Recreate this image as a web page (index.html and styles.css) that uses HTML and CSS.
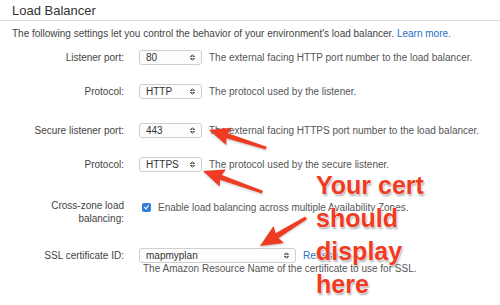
FILE: index.html
```html
<!DOCTYPE html>
<html lang="en">
  <head>
    <meta charset="UTF-8" />
    <title>Load Balancer</title>
    <link rel="stylesheet" href="styles.css">
  </head>
  <body>
    <div class="panel">
      <h2 class="panel-title">Load Balancer</h2>
      <p class="intro">
        The following settings let you control the behavior of your environment's load balancer.
        <a href="#">Learn more.</a>
      </p>

      <div class="form">
        <div class="field">
          <span class="label">Listener port:</span>
          <div class="control">
            <span class="select">80</span>
            <span class="hint">The external facing HTTP port number to the load balancer.</span>
          </div>
        </div>

        <div class="field field-protocol">
          <span class="label">Protocol:</span>
          <div class="control">
            <span class="select">HTTP</span>
            <span class="hint">The protocol used by the listener.</span>
          </div>
        </div>

        <div class="field field-secure">
          <span class="label">Secure listener port:</span>
          <div class="control">
            <span class="select">443</span>
            <span class="hint">The external facing HTTPS port number to the load balancer.</span>
          </div>
        </div>

        <div class="field field-protocol">
          <span class="label">Protocol:</span>
          <div class="control">
            <span class="select">HTTPS</span>
            <span class="hint">The protocol used by the secure listener.</span>
          </div>
        </div>

        <div class="field field-crosszone">
          <span class="label">Cross-zone load<br>balancing:</span>
          <div class="control control-top">
            <span class="checkbox"></span>
            <span class="hint">Enable load balancing across multiple Availability Zones.</span>
          </div>
        </div>

        <div class="field field-ssl">
          <span class="label">SSL certificate ID:</span>
          <div class="control">
            <span class="select select-wide">mapmyplan</span>
            <a href="#" class="refresh">Refresh</a>
          </div>
        </div>
        <div class="field field-note">
          <span></span>
          <span class="hint">The Amazon Resource Name of the certificate to use for SSL.</span>
        </div>
      </div>

      <!-- annotation drawn over the form -->
      <svg class="arrows" width="500" height="305" viewBox="0 0 500 305">
        <path transform="translate(209 130) rotate(17.5)" d="M0 0 L21 -9 L19 -2.6 L60 -1.4 L60 1.4 L19 2.6 L21 9 Z" />
        <path transform="translate(203 171) rotate(19.6)" d="M0 0 L21 -9 L19 -2.6 L63 -1.4 L63 1.4 L19 2.6 L21 9 Z" />
        <path transform="translate(260 246) rotate(-31.3)" d="M0 0 L22 -10 L20 -2.8 L54 -1.6 L54 1.6 L20 2.8 L22 10 Z" />
      </svg>
      <div class="callout">Your cert<br>should<br>display<br>here</div>
    </div>
  </body>
</html>
```

FILE: styles.css
```css
body {
  margin: 0;
  background: #fff;
  font-family: "Liberation Sans", Arial, sans-serif;
  color: #444;
}
.panel {
  position: relative;
  width: 500px;
  height: 305px;
  overflow: hidden;
}
.panel-title {
  margin: 0;
  padding: 3px 12px 0;
  height: 17px;
  font-size: 13px;
  font-weight: normal;
  color: #333;
  border-bottom: 1px solid #dcdcdc;
}
.intro {
  margin: 0;
  padding: 6px 12px 0;
  font-size: 10px;
  line-height: 13px;
  color: #444;
}
.intro a {
  color: #1f6fc5;
  text-decoration: none;
}
.form {
  display: grid;
  grid-template-columns: 124px 1fr;
  column-gap: 15px;
  font-size: 10px;
  margin-top: 10px;
}
.field {
  display: contents;
}
.label {
  text-align: right;
  line-height: 13px;
  align-self: center;
}
.control {
  display: flex;
  align-items: center;
  gap: 7px;
  height: 15px;
}
.control-top {
  align-self: start;
}
.field > * {
  margin-top: 0;
}
.field-protocol > * {
  margin-top: 19px;
}
.field-secure > * {
  margin-top: 24px;
}
.field-crosszone > * {
  margin-top: 25px;
}
.field-crosszone .label {
  align-self: start;
  margin-top: 27px;
}
.field-crosszone .control {
  margin-top: 28px;
}
.field-ssl > * {
  margin-top: 23px;
}
.field-note > * {
  margin-top: 0;
}
.field-note .hint {
  padding-left: 4px;
}
.select {
  position: relative;
  box-sizing: border-box;
  width: 63px;
  height: 15px;
  padding: 0 0 0 6px;
  border: 1px solid #cfcfcf;
  border-radius: 3px;
  background: #fdfdfd;
  color: #333;
  line-height: 13px;
  flex: none;
}
.select::after {
  content: "";
  position: absolute;
  right: 6px;
  top: 3px;
  width: 5px;
  height: 7px;
  background:
    linear-gradient(to bottom right, transparent 50%, #666 50%) left top / 50% 3px no-repeat,
    linear-gradient(to bottom left, transparent 50%, #666 50%) right top / 50% 3px no-repeat,
    linear-gradient(to top right, transparent 50%, #666 50%) left bottom / 50% 3px no-repeat,
    linear-gradient(to top left, transparent 50%, #666 50%) right bottom / 50% 3px no-repeat;
}
.select-wide {
  width: 157px;
}
.hint {
  color: #555;
  white-space: nowrap;
}
.refresh {
  color: #1f6fc5;
  text-decoration: none;
  white-space: nowrap;
}
.checkbox {
  position: relative;
  box-sizing: border-box;
  width: 9px;
  height: 9px;
  margin-left: 3px;
  border-radius: 2px;
  background: #2f7fdb;
  flex: none;
}
.checkbox::after {
  content: "";
  position: absolute;
  left: 3px;
  top: 1px;
  width: 2px;
  height: 4px;
  border: solid #fff;
  border-width: 0 1px 1px 0;
  transform: rotate(40deg);
}
.arrows {
  position: absolute;
  left: 0;
  top: 0;
  fill: #f03a22;
  filter: drop-shadow(0 1px 1px rgba(0, 0, 0, 0.25));
}
.callout {
  position: absolute;
  left: 316px;
  top: 169px;
  font-size: 25px;
  font-weight: bold;
  line-height: 33px;
  color: #f03a22;
  text-shadow: 0 0 2px #fff, 0 0 2px #fff, 1px 2px 2px rgba(0, 0, 0, 0.35);
}
```
